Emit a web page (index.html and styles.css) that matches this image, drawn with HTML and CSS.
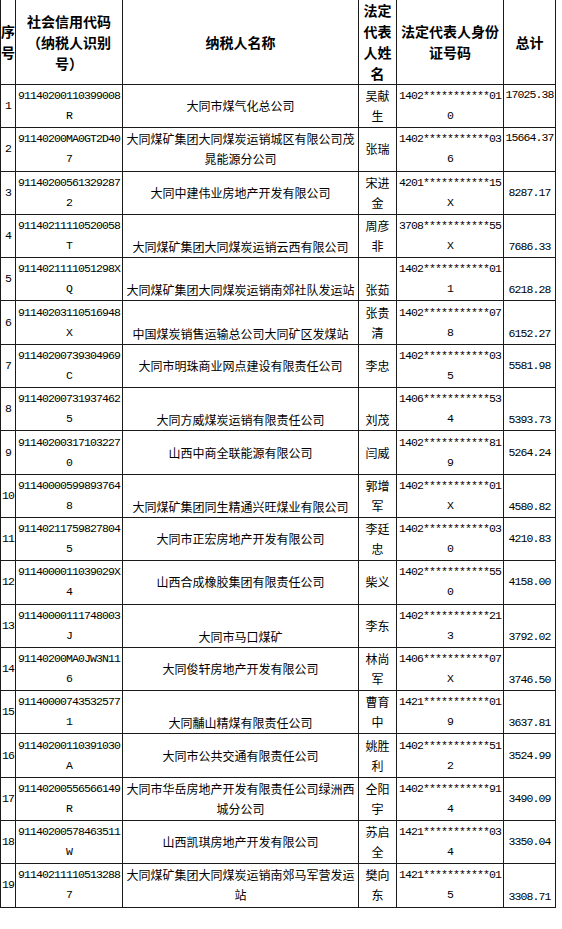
FILE: index.html
```html
<!DOCTYPE html>
<html lang="zh-CN">
<head>
<meta charset="utf-8">
<title>纳税人名单</title>
<link rel="stylesheet" href="styles.css">
</head>
<body>
<table class="tax">
  <colgroup>
    <col class="c-no"><col class="c-code"><col class="c-name"><col class="c-rep"><col class="c-id"><col class="c-amt">
  </colgroup>
  <thead>
    <tr>
      <th>序号</th>
      <th>社会信用代码<br>（纳税人识别<br>号）</th>
      <th>纳税人名称</th>
      <th class="rep">法定代表人姓名</th>
      <th>法定代表人身份<br>证号码</th>
      <th>总计</th>
    </tr>
  </thead>
  <tbody>
    <tr><td class="num">1</td><td class="num">91140200110399008R</td><td class="cjk">大同市煤气化总公司</td><td class="cjk rep">吴献生</td><td class="num">1402***********010</td><td class="num top">17025.38</td></tr>
    <tr><td class="num">2</td><td class="num">91140200MA0GT2D407</td><td class="cjk">大同煤矿集团大同煤炭运销城区有限公司茂晁能源分公司</td><td class="cjk rep">张瑞</td><td class="num">1402***********036</td><td class="num top">15664.37</td></tr>
    <tr><td class="num">3</td><td class="num">911402005613292872</td><td class="cjk">大同中建伟业房地产开发有限公司</td><td class="cjk rep">宋进金</td><td class="num">4201***********15X</td><td class="num">8287.17</td></tr>
    <tr><td class="num">4</td><td class="num">91140211110520058T</td><td class="cjk bot">大同煤矿集团大同煤炭运销云西有限公司</td><td class="cjk rep">周彦非</td><td class="num">3708***********55X</td><td class="num bot">7686.33</td></tr>
    <tr><td class="num">5</td><td class="num">9114021111051298XQ</td><td class="cjk bot">大同煤矿集团大同煤炭运销南郊社队发运站</td><td class="cjk rep bot">张茹</td><td class="num">1402***********011</td><td class="num bot">6218.28</td></tr>
    <tr><td class="num">6</td><td class="num">91140203110516948X</td><td class="cjk bot">中国煤炭销售运输总公司大同矿区发煤站</td><td class="cjk rep">张贵清</td><td class="num">1402***********078</td><td class="num bot">6152.27</td></tr>
    <tr><td class="num">7</td><td class="num">91140200739304969C</td><td class="cjk">大同市明珠商业网点建设有限责任公司</td><td class="cjk rep">李忠</td><td class="num">1402***********035</td><td class="num">5581.98</td></tr>
    <tr><td class="num">8</td><td class="num">911402007319374625</td><td class="cjk bot">大同方威煤炭运销有限责任公司</td><td class="cjk rep bot">刘茂</td><td class="num">1406***********534</td><td class="num bot">5393.73</td></tr>
    <tr><td class="num">9</td><td class="num">911402003171032270</td><td class="cjk">山西中商全联能源有限公司</td><td class="cjk rep">闫威</td><td class="num">1402***********819</td><td class="num">5264.24</td></tr>
    <tr><td class="num">10</td><td class="num">911400005998937648</td><td class="cjk bot">大同煤矿集团同生精通兴旺煤业有限公司</td><td class="cjk rep">郭增军</td><td class="num">1402***********01X</td><td class="num bot">4580.82</td></tr>
    <tr><td class="num">11</td><td class="num">911402117598278045</td><td class="cjk">大同市正宏房地产开发有限公司</td><td class="cjk rep">李廷忠</td><td class="num">1402***********030</td><td class="num">4210.83</td></tr>
    <tr><td class="num">12</td><td class="num">9114000011039029X4</td><td class="cjk">山西合成橡胶集团有限责任公司</td><td class="cjk rep">柴义</td><td class="num">1402***********550</td><td class="num">4158.00</td></tr>
    <tr><td class="num">13</td><td class="num">91140000111748003J</td><td class="cjk bot">大同市马口煤矿</td><td class="cjk rep">李东</td><td class="num">1402***********213</td><td class="num bot">3792.02</td></tr>
    <tr><td class="num">14</td><td class="num">91140200MA0JW3N116</td><td class="cjk">大同俊轩房地产开发有限公司</td><td class="cjk rep">林尚军</td><td class="num">1406***********07X</td><td class="num bot">3746.50</td></tr>
    <tr><td class="num">15</td><td class="num">911400007435325771</td><td class="cjk bot">大同黼山精煤有限责任公司</td><td class="cjk rep">曹育中</td><td class="num">1421***********019</td><td class="num bot">3637.81</td></tr>
    <tr><td class="num">16</td><td class="num">91140200110391030A</td><td class="cjk">大同市公共交通有限责任公司</td><td class="cjk rep">姚胜利</td><td class="num">1402***********512</td><td class="num">3524.99</td></tr>
    <tr><td class="num">17</td><td class="num">91140200556566149R</td><td class="cjk">大同市华岳房地产开发有限责任公司绿洲西城分公司</td><td class="cjk rep">仝阳宇</td><td class="num">1402***********914</td><td class="num">3490.09</td></tr>
    <tr><td class="num">18</td><td class="num">91140200578463511W</td><td class="cjk">山西凯琪房地产开发有限公司</td><td class="cjk rep">苏启全</td><td class="num">1421***********034</td><td class="num">3350.04</td></tr>
    <tr><td class="num">19</td><td class="num">911402111105132887</td><td class="cjk">大同煤矿集团大同煤炭运销南郊马军营发运站</td><td class="cjk rep">樊向东</td><td class="num">1421***********015</td><td class="num bot">3308.71</td></tr>
  </tbody>
</table>
</body>
</html>
```

FILE: styles.css
```css
html, body {
  margin: 0;
  padding: 0;
  background: #fff;
}

.tax {
  border-collapse: collapse;
  table-layout: fixed;
  width: 556px;
  color: #000;
}

.c-no { width: 15px; }
.c-code { width: 107px; }
.c-name { width: 236px; }
.c-rep { width: 38px; }
.c-id { width: 107px; }
.c-amt { width: 52px; }

.tax th,
.tax td {
  border: 1px solid #1a1a1a;
  padding: 0 1px;
  text-align: center;
  vertical-align: middle;
  overflow: hidden;
}

.tax thead th {
  border-top: none;
  height: 84px;
  font-family: "Noto Sans CJK SC", sans-serif;
  font-weight: 700;
  font-size: 14px;
  line-height: 21px;
  padding: 0;
}

.tax tbody td {
  height: 42.3px;
  line-height: 20px;
}

.num {
  font-family: "Liberation Mono", "Noto Sans CJK SC", monospace;
  font-size: 11.5px;
  letter-spacing: -0.9px;
  word-break: break-all;
}

.cjk {
  font-family: "Noto Sans CJK SC", sans-serif;
  font-size: 12px;
}

.tax .rep {
  padding: 0 2px;
}

.tax .top { vertical-align: top; }
.tax .bot { vertical-align: bottom; }
```
